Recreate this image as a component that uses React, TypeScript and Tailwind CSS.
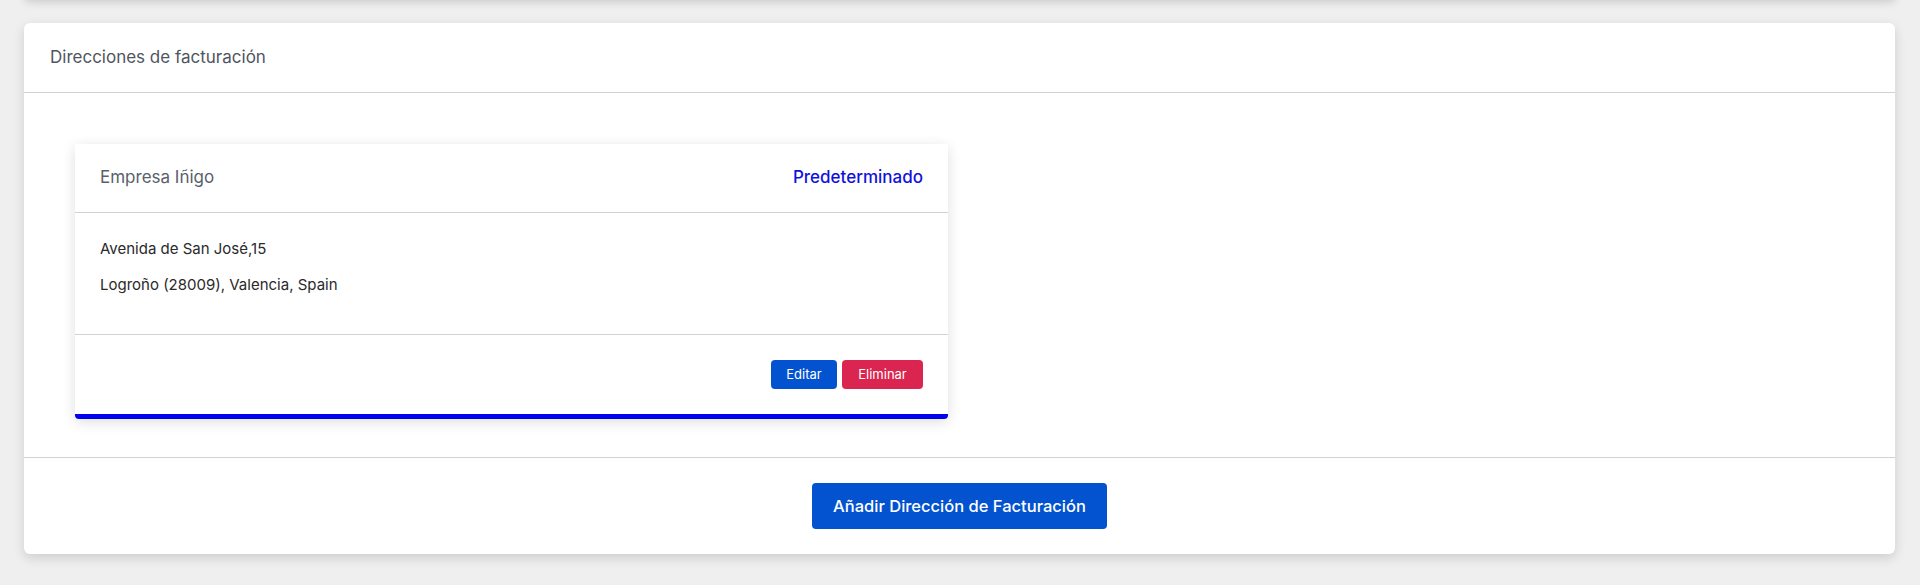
import React from "react";

export default function App() {
  return (
    <div
      className="min-h-[585px] w-full bg-[#efefef] px-[24px] pb-[31px] pt-0"
      style={{ fontFamily: "Inter, 'Open Sans', sans-serif" }}
    >
      <div className="-mt-[20px] h-[20px] w-full rounded-b-[6px] bg-white shadow-[0_2px_8px_rgba(0,0,0,0.16)]" />
      <div className="mt-[23px] mr-[1px] rounded-[6px] bg-white shadow-[0_4px_12px_rgba(0,0,0,0.14)]">
        <div className="flex h-[70px] items-center border-b border-[#d2d2d2] px-[26px]">
          <span className="text-[17px] text-[#50555f]">Direcciones de facturación</span>
        </div>
        <div className="border-b border-[#d2d2d2] pb-[38px] pl-[51px] pt-[51px]">
          <div className="w-[873px] overflow-hidden rounded-b-[4px] bg-white shadow-[0_3px_14px_rgba(0,0,0,0.13)]">
            <div className="flex h-[69px] items-center justify-between border-b border-[#d2d2d2] px-[25px]">
              <span className="text-[17px] text-[#5a5f6c]">Empresa Iñigo</span>
              <span className="text-[17px] font-medium text-[#1111dd]">Predeterminado</span>
            </div>
            <div className="flex flex-col gap-[14px] border-b border-[#d2d2d2] px-[25px] pb-[38px] pt-[25px]">
              <p className="text-[15px] leading-[22px] text-[#2a2a2a]">Avenida de San José,15</p>
              <p className="text-[15px] leading-[22px] text-[#2a2a2a]">Logroño (28009), Valencia, Spain</p>
            </div>
            <div className="flex h-[79px] items-center justify-end gap-[5px] px-[25px]">
              <button className="h-[29px] w-[66px] rounded-[4px] bg-[#0353d0] text-[13px] text-white">Editar</button>
              <button className="h-[29px] w-[81px] rounded-[4px] bg-[#d92550] text-[13px] text-white">Eliminar</button>
            </div>
            <div className="h-[5px] bg-[#0000ee]" />
          </div>
        </div>
        <div className="flex justify-center py-[25px]">
          <button className="h-[46px] w-[295px] rounded-[4px] bg-[#0353d0] text-[16.5px] font-medium text-white">
            Añadir Dirección de Facturación
          </button>
        </div>
      </div>
    </div>
  );
}
